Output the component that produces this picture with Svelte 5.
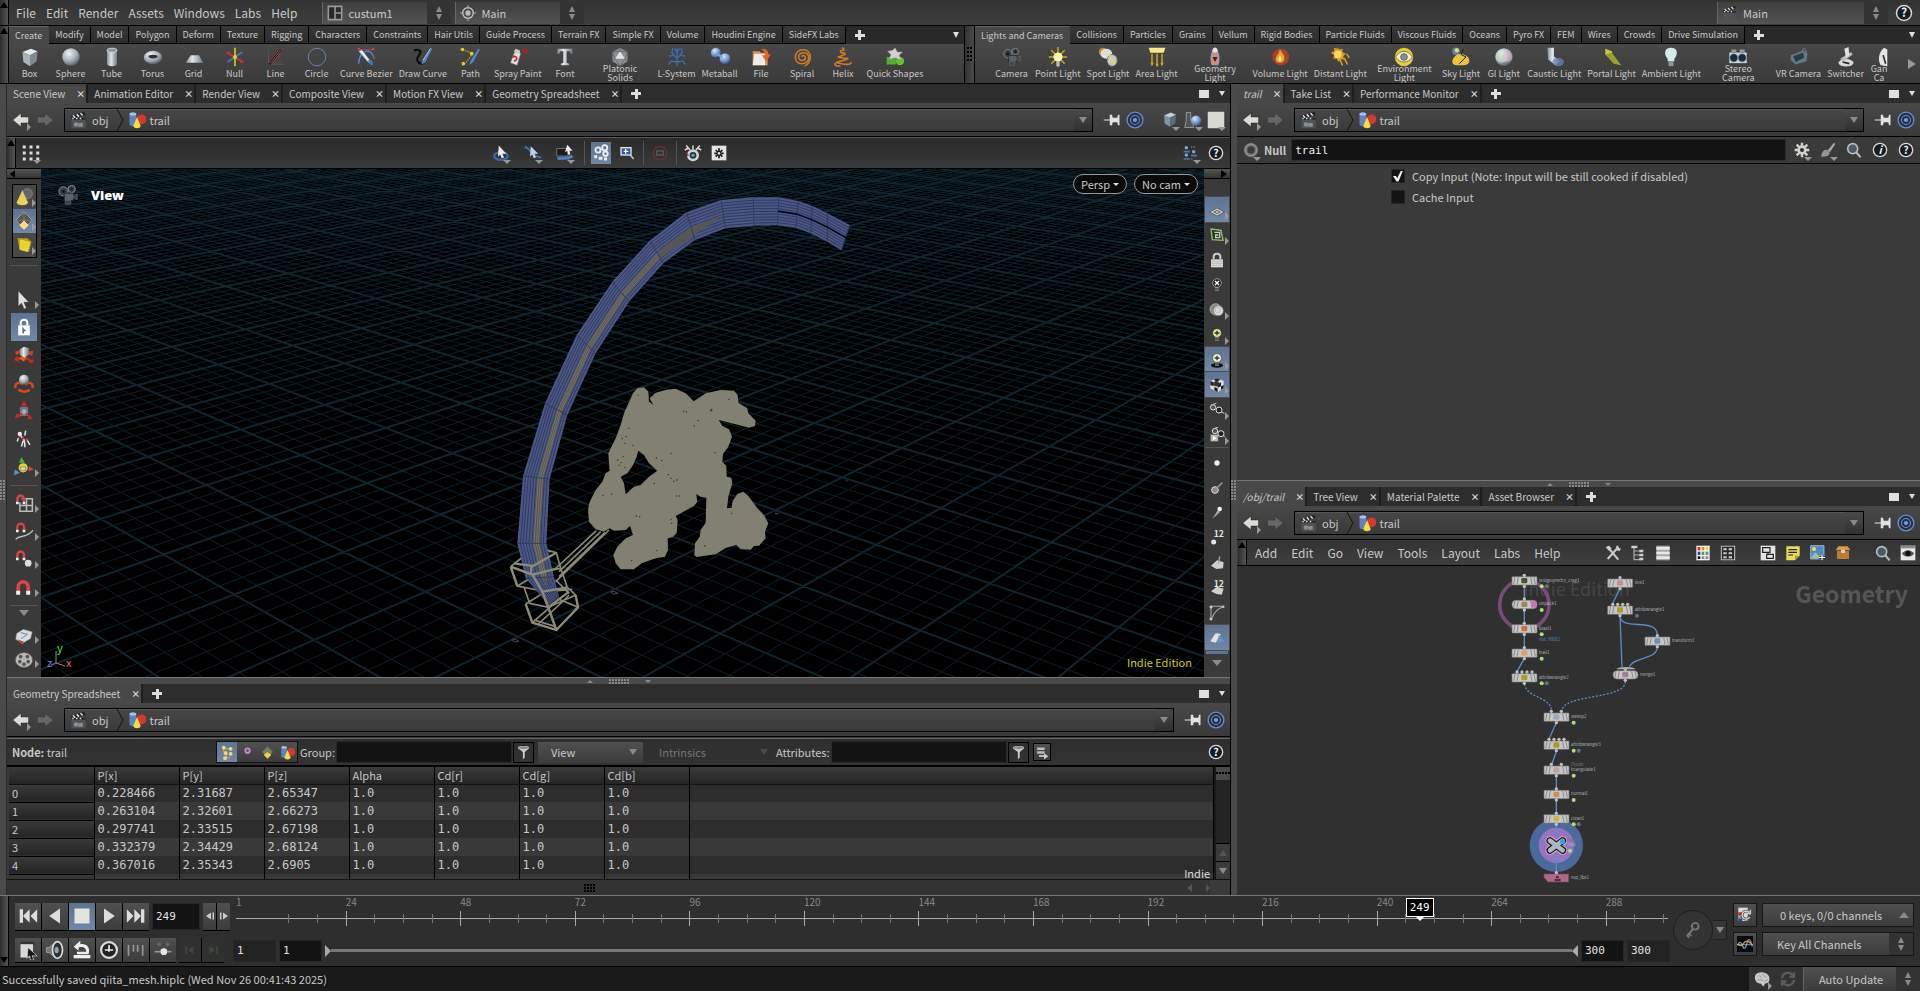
<script lang="ts">
  type Point = [number, number]

  const main_menu = ['File', 'Edit', 'Render', 'Assets', 'Windows', 'Labs', 'Help']
  const network_menu = ['Add', 'Edit', 'Go', 'View', 'Tools', 'Layout', 'Labs', 'Help']

  const shelf_sets = [
    {
      tabs: ['Create', 'Modify', 'Model', 'Polygon', 'Deform', 'Texture', 'Rigging', 'Characters', 'Constraints', 'Hair Utils', 'Guide Process', 'Terrain FX', 'Simple FX', 'Volume', 'Houdini Engine', 'SideFX Labs'],
      tools: [
        ['Box', 'box'], ['Sphere', 'sphere'], ['Tube', 'tube'], ['Torus', 'torus'], ['Grid', 'grid'],
        ['Null', 'null'], ['Line', 'line'], ['Circle', 'circle'], ['Curve Bezier', 'bezier'], ['Draw Curve', 'draw'],
        ['Path', 'path'], ['Spray Paint', 'spray'], ['Font', 'font'], ['Platonic Solids', 'platonic', 'two_line'], ['L-System', 'lsystem'],
        ['Metaball', 'metaball'], ['File', 'file'], ['Spiral', 'spiral'], ['Helix', 'helix'], ['Quick Shapes', 'quick'],
      ],
    },
    {
      tabs: ['Lights and Cameras', 'Collisions', 'Particles', 'Grains', 'Vellum', 'Rigid Bodies', 'Particle Fluids', 'Viscous Fluids', 'Oceans', 'Pyro FX', 'FEM', 'Wires', 'Crowds', 'Drive Simulation'],
      tools: [
        ['Camera', 'camera'], ['Point Light', 'point'], ['Spot Light', 'spot'], ['Area Light', 'area'], ['Geometry Light', 'geolight', 'two_line'],
        ['Volume Light', 'fire'], ['Distant Light', 'distant'], ['Environment Light', 'env', 'two_line'], ['Sky Light', 'sky'], ['GI Light', 'gi'],
        ['Caustic Light', 'caustic'], ['Portal Light', 'portal'], ['Ambient Light', 'bulb'], ['Stereo Camera', 'stereo', 'two_line'],
        ['VR Camera', 'vr'], ['Switcher', 'switcher'], ['Gan Ca', 'gamepad', 'two_line cut'],
      ],
    },
  ]

  const scene_tabs = ['Scene View', 'Animation Editor', 'Render View', 'Composite View', 'Motion FX View', 'Geometry Spreadsheet']
  const param_tabs = ['trail', 'Take List', 'Performance Monitor']
  const network_tabs = ['/obj/trail', 'Tree View', 'Material Palette', 'Asset Browser']

  const columns = ['P[x]', 'P[y]', 'P[z]', 'Alpha', 'Cd[r]', 'Cd[g]', 'Cd[b]']
  const rows = [
    ['0.228466', '2.31687', '2.65347'],
    ['0.263104', '2.32601', '2.66273'],
    ['0.297741', '2.33515', '2.67198'],
    ['0.332379', '2.34429', '2.68124'],
    ['0.367016', '2.35343', '2.6905'],
  ]

  // [icon, flags] where s = selected, a = has a sub menu arrow
  const mode_tools = [['cone', 'a'], ['tiles', 'sa'], ['cube_gold', 'a']]
  const transform_tools = [['cursor', 'a'], ['lock_tool', 's'], ['move', ''], ['rotate', ''], ['scale', ''], ['pose', ''], ['handles', 'a']]
  const snap_tools = [['magnet_grid', 'a'], ['magnet_curve', 'a'], ['magnet_point', 'a'], ['magnet', 'a']]
  const display_tools = [['ref_plane', 'sa'], ['ghost', 'a'], ['padlock', ''], ['bulb_off', ''], ['bulb_ring', 'a'], ['bulb_plus', 'a'], ['bulb_shadow', 'sa'], ['checker', 'sa'], ['eye', 'a'], ['eye_box', 'a']]
  const marker_tools = [['dot', ''], ['pt_normal', ''], ['pt_trail', ''], ['pt_num', ''], ['prim_normal', ''], ['prim_num', ''], ['profile', ''], ['backface', 's']]

  const frame_start = 1
  const frame_end = 300
  const current_frame = 249
  let copy_input = $state(true)
  let cache_input = $state(false)

  const frame_pos = (frame: number) => ((frame - frame_start) / (frame_end - frame_start)) * 100
  const ticks = Array.from({ length: 49 }, (_, i) => (i + 2) * 6)
  const major_frames = Array.from({ length: 12 }, (_, i) => (i + 1) * 24)

  // ground plane: two fans of lines, each leaving its own vanishing point
  const horizon = -249
  const ground_y = 331
  const fan = (vanish_x: number, start: number, step: number, from: number, to: number, major: boolean) => {
    let d = ''
    for (let n = from; n <= to; n++) {
      if ((n % 5 === 0) !== major) continue
      const x = start + (step * n) / 5
      const at = (y: number) => (vanish_x + ((x - vanish_x) * (y - horizon)) / (ground_y - horizon)).toFixed(1)
      d += `M${at(0)} 0L${at(600)} 600`
    }
    return d
  }
  const grid_minor = fan(-996, 196, 169.5, -50, 125, false) + fan(1934, 119, 159, -145, 60, false)
  const grid_major = fan(-996, 196, 169.5, -50, 125, true) + fan(1934, 119, 159, -145, 60, true)

  const outer: Point[] = [[270, 1275], [200, 1195], [175, 1090], [192, 888], [258, 670], [353, 465], [460, 305], [572, 182], [682, 97], [786, 60], [883, 52], [960, 52], [1018, 63], [1060, 78], [1105, 100], [1172, 135]]
  const inner: Point[] = [[300, 1250], [285, 1190], [262, 1090], [272, 897], [325, 705], [410, 520], [510, 365], [613, 250], [708, 180], [800, 145], [885, 137], [955, 136], [1010, 143], [1055, 160], [1105, 185], [1147, 211]]
  const mix = (t: number, from = 0, to = outer.length) =>
    outer.slice(from, to).map(([x, y], i): Point => [x + (inner[i + from][0] - x) * t, y + (inner[i + from][1] - y) * t])
  const poly = (points: Point[]) => points.map((p) => p.map(Math.round).join(',')).join(' ')
  const ribbon = poly([...outer, ...[...inner].reverse()])
  const ribbon_core = poly([[262, 1225], ...mix(0.52, 1, 9), [800, 101], ...mix(0.78, 1, 8).reverse()])
  const ribbon_slit = poly([...mix(0.46, 11), [1180, 170], ...mix(0.52, 11).reverse()])
  const strands = [0.1, 0.2, 0.3, 0.4, 0.5, 0.6, 0.7, 0.8, 0.9]
  const core_strands = [0.58, 0.65, 0.72]

  const nodes = [
    { x: 193, y: 62, label: 'testgeometry_crag1', badge: '#4a5230', dots: 2 },
    { x: 193, y: 133, label: 'unpack1', badge: '#9a8a50', dots: 1, round: true },
    { x: 193, y: 206, label: 'blast1', badge: '#d0703a', dots: 1 },
    { x: 193, y: 279, label: 'trail1', badge: '#e0a070', dots: 1 },
    { x: 193, y: 353, label: 'attribwrangle2', badge: '#b09a20', dots: 2, inputs: 4 },
    { x: 480, y: 69, label: 'line1', badge: '#c09090', dots: 0 },
    { x: 480, y: 150, label: 'attribwrangle1', badge: '#b09a20', dots: 3, inputs: 4 },
    { x: 592, y: 243, label: 'transform1', badge: '#6a90b8', dots: 0 },
    { x: 496, y: 344, label: 'merge1', badge: '#a08090', dots: 0, round: true },
    { x: 289, y: 471, label: 'sweep2', badge: '#a0a8c0', dots: 1, inputs: 2 },
    { x: 289, y: 555, label: 'attribwrangle3', badge: '#b09a20', dots: 2, inputs: 4 },
    { x: 289, y: 630, label: 'triangulate1', badge: '#c0a0a0', dots: 1, inputs: 2 },
    { x: 289, y: 703, label: 'normal1', badge: '#d09050', dots: 1 },
    { x: 289, y: 776, label: 'clean1', badge: '#d0b040', dots: 2 },
  ]

  const magnet = '<path d="M3 15V9a7 7 0 0 1 14 0v6h-4V9a3 3 0 0 0-6 0v6z" fill="#d24a4a" stroke="#7a2222" stroke-width=".6"/><path d="M3 13h4v4H3zM13 13h4v4h-4z" fill="#eee"/>'
  const magnet_small = `<g transform="scale(.8)">${magnet}</g>`
  const bulb = (fill: string) => `<circle cx="12" cy="9" r="6.500" fill="${fill}" stroke="#222" stroke-width=".6"/><path d="M9 15h6v6H9z" fill="#777"/><path d="M9 17h6M9 19h6" stroke="#444"/>`
  const glasses = '<circle cx="6" cy="8" r="4" fill="#555" stroke="#ddd" stroke-width="1.500"/><circle cx="15" cy="12" r="4.500" fill="#222" stroke="#ddd" stroke-width="1.500"/><path d="M3 5l8-3M18 15l5 2" stroke="#bbb" stroke-width="1.600"/>'
  const clapper = '<path d="M2 10h19v13H2z" fill="#4d5256"/><path d="M2 9.500h19v2H2z" fill="#222"/><path d="M1 7l18-6 2 4-18 5z" fill="#222"/><path d="M4 6l3 3M9 4.500l3 3M14 3l3 3M4 9v2M9 9v2M14 9v2" stroke="#ddd" stroke-width="2"/>'
  const camera = '<circle cx="7" cy="8" r="5" fill="#3b4045" stroke="#8a9094"/><circle cx="16" cy="5.500" r="4" fill="#3b4045" stroke="#8a9094"/><path d="M8 10h10v8H8z" fill="#596066" stroke="#23282c"/><path d="M18 13l4-2v6l-4-2zM9 18h6v4H9z" fill="#3a3f44" stroke="#777c80" stroke-width=".6"/><circle cx="7" cy="8" r="1.800" fill="#15181a"/><circle cx="16" cy="5.500" r="1.400" fill="#15181a"/>'
  const number_text = '<text x="7" y="11" class="icon_number">12</text>'
  const ring = '<circle cx="12" cy="12" r="10" fill="#161c22" stroke="#d8d8d8" stroke-width="2"/>'

  const icons: Record<string, string> = {
    box: '<path d="M3 6l10-4 8 3-9 5z" fill="#e4e9ec"/><path d="M3 6l9 4v13l-8-5z" fill="#a9b4ba"/><path d="M12 10l9-5-1 12-8 6z" fill="#7d8b93"/>',
    sphere: '<circle cx="12" cy="12" r="10.500" fill="url(#ball)"/>',
    tube: '<path d="M6 4v16c0 4 12 4 12 0V4z" fill="url(#steel)"/><ellipse cx="12" cy="4" rx="6" ry="2.500" fill="#8b98a3" stroke="#dbe2e6"/>',
    torus: '<ellipse cx="12" cy="12.500" rx="11" ry="8" fill="url(#ball)"/><ellipse cx="12" cy="11.500" rx="5.500" ry="2.200" fill="#2b3137"/>',
    grid: '<path d="M8 10h10l5 9H2z" fill="url(#steel)"/>',
    null: '<path d="M12 1v22" stroke="#b7b61c" stroke-width="2.400"/><path d="M2 7l20 11" stroke="#d03030" stroke-width="2"/><path d="M21 6L3 18" stroke="#3f77c0" stroke-width="2"/><path d="M18 15l5 4h-5zM2 5l5 1-3 3z" fill="#d03030"/><circle cx="12" cy="12" r="2.500" fill="#d8cf30"/>',
    line: '<path d="M3 3v18h20M5 19l13 0M8 22L20 2" stroke="#555" fill="none"/><path d="M4 21L18 3" stroke="#e33" stroke-width="4"/><path d="M4 21L18 3" stroke="#111" stroke-width="3"/><path d="M5 20L18 3" stroke="#999" stroke-width=".8"/><path d="M15 7c0 6 2 12 6 13" stroke="#c33" stroke-dasharray="2 2" fill="none"/>',
    circle: '<circle cx="12" cy="12" r="10.500" fill="none" stroke="#6a80a8" stroke-width="1.200"/>',
    bezier: '<path d="M3 20C5 2 18 0 22 14" fill="none" stroke="#4c8ad0" stroke-width="1.800"/><path d="M4 3h18" stroke="#b44"/><path d="M3 5l4-2 10 13 3 6-6-4z" fill="#dfe6ec" stroke="#345" stroke-width=".6"/><path d="M14 16l4 6 3 0-2-6z" fill="#3a78c8"/><path d="M2 1h3v3H2zM19 1h3v3h-3z" fill="#d04040"/>',
    draw: '<path d="M1 4c8-2 10 2 6 6-4 5-1 11 5 10" fill="none" stroke="#0c0c0c" stroke-width="2.600"/><path d="M10 21l2-6L21 1l2 1-8 16z" fill="#4c86cc"/><path d="M12 16L21 2" stroke="#b9d4f0"/>',
    path: '<path d="M3 3l12 5-9 12" fill="none" stroke="#bb9b18" stroke-dasharray="2 1" stroke-width="1.500"/><circle cx="3" cy="3" r="2.200" fill="#e6c820"/><circle cx="14" cy="8" r="2.200" fill="#e6c820"/><circle cx="4" cy="20" r="2.200" fill="#e6c820"/><path d="M11 22l2-6L22 2l2 1-8 15z" fill="#4c86cc"/>',
    spray: '<path d="M8 6l7 2-4 14-8-3z" fill="#e4e4e4" stroke="#777" stroke-width=".6"/><path d="M9 2l5 2 1 5-8-3z" fill="#c9c9c9"/><path d="M5 12c6-3 8 4 2 5" fill="none" stroke="#d02020" stroke-width="2"/><path d="M15 4l8-2v7z" fill="#c01818"/>',
    font: '<path d="M3 2h18v6h-2l-1-3h-4v14l3 1v2H7v-2l3-1V5H6L5 8H3z" fill="url(#steel)"/>',
    platonic: '<path d="M12 1l9 5v11l-9 6-9-6V6z" fill="#8c8f91"/><path d="M12 5l6 9H6z" fill="#e0e2e3"/><path d="M12 1v4L3 6l3 8-3 3M12 5l9 1-3 8 3 3M6 14l6 9 6-9" fill="none" stroke="#5a5c5e" stroke-width=".8"/>',
    lsystem: '<path d="M12 23v-9M12 14L5 6M12 14l7-8M12 12V2M8 10L2 11M16 10l6 1M6 7L7 1M18 7l-1-6M12 18l-7-1-3 4M12 18l7-1 3 4M12 6L9 2M12 6l3-4" stroke="#3a70b4" stroke-width="1.600" fill="none"/>',
    metaball: '<circle cx="7" cy="7" r="6" fill="url(#blue)"/><circle cx="18" cy="14" r="6.500" fill="url(#blue)"/><path d="M9 9l6 3" stroke="#7ea6d8" stroke-width="3"/>',
    file: '<path d="M2 5h8l2 2h8v15H2z" fill="#d89050"/><path d="M4 8h13v14H2z" fill="#ececec"/><path d="M12 3c6-3 9 2 9 6h3l-6 8-5-7h4c0-4-2-6-5-7z" fill="#e8641e"/>',
    spiral: '<path d="M12 12c0-3 4-2 4 1 0 4-8 5-8-1 0-7 12-7 12 1 0 9-16 10-16-1C4 1 22 0 22 12c0 6-3 9-7 11" fill="none" stroke="#d07c28" stroke-width="1.900"/>',
    helix: '<path d="M11 1c3 1 3 3 0 3s-3 3 0 3 6 1 1 3-9 2-2 3 12 0 3 3-13 2-3 4 13 0 11-2M3 19c-3 3 2 4 6 4" fill="none" stroke="#cf7b2c" stroke-width="1.900"/>',
    quick: '<path d="M2 12h11v9H2z" fill="#55b02c"/><circle cx="18" cy="17" r="5" fill="#5cc432"/><path d="M12 1l3 5 6 0-4 4 3 6-8-3-7 2 2-6-4-4 6-1z" fill="#cfd2cf" stroke="#888" stroke-width=".6"/>',
    camera,
    point: '<path d="M12 0v24M1 12h22M4 4l16 16M20 4L4 20" stroke="#c9a720" stroke-width="1.800"/><circle cx="12" cy="12" r="5.500" fill="#fff7b0"/><path d="M10 17h4v6h-4z" fill="#b9b9b9"/>',
    spot: '<circle cx="6" cy="6" r="5" fill="#e08420"/><ellipse cx="10" cy="8" rx="7" ry="6" fill="#dcdcdc"/><ellipse cx="17" cy="16" rx="6" ry="7" fill="#c8cac4" stroke="#777"/><path d="M13 9l7 11" stroke="#e8d850" stroke-width="1.800"/>',
    area: '<path d="M2 1h20l-2 6H4z" fill="#fbe88a"/><path d="M6 8v14M12 8v15M18 8v14" stroke="#c9a720" stroke-width="1.800"/><path d="M4 19h4l-2 4zM10 20h4l-2 4zM16 19h4l-2 4z" fill="#c9a720"/>',
    geolight: '<path d="M12 0c5 4 7 14 4 22H8C5 14 7 4 12 0z" fill="#b890a8"/><circle cx="12" cy="4" r="3" fill="#e4e0e4"/><path d="M12 8c3 4 3 9 0 13-3-4-3-9 0-13z" fill="#f08820"/><path d="M9 12l3 6 3-6z" fill="#2a2a3a"/>',
    fire: '<circle cx="13" cy="12" r="10" fill="#c04028" opacity=".8"/><path d="M12 2c1 5 7 7 5 14-1 4-9 4-10 0-1-5 4-7 5-14z" fill="#f6a020"/><path d="M12 10c2 3 3 5 0 8-3-3-2-5 0-8z" fill="#fff2a0"/>',
    distant: '<path d="M9 0l2 3 4-1 0 4 4 2-3 3 1 4-4 0-3 3-2-4-4 0 1-4-4-3 4-2 0-4 4 1z" fill="#e09a20"/><circle cx="9.500" cy="9" r="4.500" fill="#ffd860"/><path d="M12 15l3 7M17 13l4 8M20 8l3 5" stroke="#d0a820" stroke-width="1.800"/>',
    env: '<circle cx="12" cy="12" r="11" fill="#e6cc3a"/><path d="M2 12c5-9 15-9 20 0-5 8-15 8-20 0z" fill="#f7f2d0" stroke="#7a6a10"/><circle cx="12" cy="12" r="4" fill="#8a8f9a" stroke="#555"/>',
    sky: '<circle cx="6" cy="5" r="4.500" fill="#5a86b8"/><path d="M4 12c5-6 12-4 16 0 4 4 2 10-5 10H7c-6 0-7-6-3-10z" fill="#eec23a"/><path d="M15 2l-3 7 6 3-8 8" stroke="#222" fill="none" stroke-width="1.200"/><circle cx="7" cy="4" r="2.500" fill="#f6d850"/>',
    gi: '<circle cx="12" cy="12" r="10.500" fill="url(#ball)"/><circle cx="9" cy="12" r="7" fill="#c8e8c8" opacity=".55"/><circle cx="16" cy="12" r="6" fill="#e8b8c8" opacity=".5"/>',
    caustic: '<path d="M4 1h8v10l7 6-5 5-9-7z" fill="url(#steel)"/><ellipse cx="17" cy="18" rx="7" ry="5" fill="#6a88b8" opacity=".7"/>',
    portal: '<path d="M4 2l8 3v9l-8-5z" fill="#c8c83a"/><path d="M4 9l8-2 11 15-9-2z" fill="#99a02a"/>',
    bulb: '<path d="M12 1c8 0 9 8 4 13v3H8v-3C3 9 4 1 12 1z" fill="#d4ece8"/><path d="M9 17h6v6H9z" fill="#8e9494"/>',
    stereo: '<path d="M1 6h22v14H1z" fill="#cfd3d6" stroke="#333"/><circle cx="7" cy="13" r="5" fill="#1a2a40" stroke="#8ab"/><circle cx="17" cy="13" r="5" fill="#1a2a40" stroke="#8ab"/><path d="M4 3h6v3H4zM14 3h6v3h-6z" fill="#999"/>',
    vr: '<path d="M2 10l16-6 4 5-1 8-13 4-6-5z" fill="#5e7a86"/><path d="M5 11l12-4 1 6-10 5z" fill="#2a3a42"/><path d="M16 5c0-5 5-5 5 4" fill="none" stroke="#889"/>',
    switcher: '<ellipse cx="12" cy="19" rx="9" ry="4.500" fill="#d8d8d8"/><path d="M5 14l13-8 2 3-12 9z" fill="#b8bcbe"/><path d="M10 2l5-2 1 10-4 3z" fill="#e2e2e2"/><path d="M8 18l8 2" stroke="#222" stroke-width="2"/>',
    gamepad: '<path d="M14 22c-4-7-2-16 4-21l4 2v20z" fill="#e4e4e4"/><path d="M17 10l3 10" stroke="#333" stroke-width="2"/>',

    layout: '<path d="M2 2h20v20H2zM12 2v20M12 12h10" fill="#2a2a2a" stroke="#999" stroke-width="2.400"/>',
    desk: '<circle cx="12" cy="12" r="8" fill="none" stroke="#ccc" stroke-width="1.800"/><circle cx="12" cy="12" r="4" fill="#bbb"/><path d="M12 0v6M12 18v6M0 12h6M18 12h6" stroke="#aaa" stroke-width="1.500"/>',
    clapper,
    help: `${ring}<text x="12" y="17.500" class="icon_glyph">?</text>`,
    info: `${ring}<text x="12" y="17.500" class="icon_glyph slanted">i</text>`,
    obj: clapper + '<circle cx="8" cy="18" r="3" fill="#8a8f92"/><path d="M11 16h6v5h-6z" fill="#8a8f92"/>',
    shapes: '<path d="M2 4c0-3 9-3 9 0v14c0 3-9 3-9 0z" fill="#5a86c0"/><ellipse cx="6.500" cy="4" rx="4.500" ry="2" fill="#a8c4e4"/><circle cx="18" cy="11" r="6.500" fill="#d43a2c"/><path d="M12 8l5 12c-1 4-9 4-10 0z" fill="#f6dc3c"/>',
    back: '<path d="M1 12L12 3v5h10v8H12v5z" fill="#dcdcd6" stroke="#222" stroke-width=".6"/>',
    forward: '<path d="M23 12L12 3v5H2v8h10v5z" fill="#666" stroke="#333" stroke-width=".6"/>',
    pin: '<path d="M1 12h9" stroke="#ccc" stroke-width="1.600"/><path d="M9 5h3l1 4h6l1-4h2v14h-2l-1-4h-6l-1 4H9z" fill="#e2e2de"/>',
    target: '<circle cx="12" cy="12" r="10.500" fill="#223048" stroke="#6a8ec4" stroke-width="1.800"/><circle cx="12" cy="12" r="6" fill="none" stroke="#6a8ec4" stroke-width="1.500"/><circle cx="12" cy="12" r="2.800" fill="#6aa0e8"/>',
    cube: '<path d="M4 6l9-4 7 3-8 4z" fill="#c4d0d8"/><path d="M4 6l8 3v12l-7-4z" fill="#8294a0"/><path d="M12 9l8-4-1 11-7 5z" fill="#5b6d7a"/>',
    solids: '<path d="M3 2h6v8l4 12H1L3 12z" fill="#555" stroke="#aaa"/><circle cx="16" cy="13" r="7" fill="url(#blue)"/>',
    square: '<path d="M1 1h22v22H1z" fill="#d8d8d4"/>',
    dots: '<path d="M1 2h4v4H1zM10 2h4v4h-4zM19 2h4v4h-4zM1 10h4v4H1zM10 10h4v4h-4zM19 10h4v4h-4zM1 18h4v4H1zM10 18h4v4h-4zM19 18h4v4h-4z" fill="#ddd"/>',
    view_tool: '<ellipse cx="12" cy="16" rx="9" ry="5" fill="none" stroke="#3a6ab0" stroke-width="3"/><path d="M9 2l10 11h-5l2 5-3 1-2-5-3 3z" fill="#eee"/>',
    view_curve: '<path d="M1 4c8 0 8 14 22 14" fill="none" stroke="#3a6ab0" stroke-width="3"/><path d="M9 3l10 10h-5l2 5-3 1-2-5-3 3z" fill="#bcd0e8"/>',
    view_box: '<path d="M1 6h15v10H1z" fill="#1c1c1c" stroke="#888"/><path d="M2 20c6-3 12 2 20-4" stroke="#4a80c8" stroke-width="4" fill="none"/><path d="M15 1l7 8h-4l1 5-3 0-1-5-3 2z" fill="#eee"/>',
    objects: '<g fill="none" stroke="#eee" stroke-width="2.400"><circle cx="8" cy="8" r="3.500"/><circle cx="17" cy="5" r="3.500"/><circle cx="18" cy="13" r="3"/></g><path d="M3 15h4v4H3zM9 17h5v4H9zM16 18h4v4h-4z" fill="#eee"/>',
    zoom_sel: '<path d="M2 3h17v13H2z" fill="#dfe6ee"/><path d="M4 5h13v9H4z" fill="#2c5a9a"/><path d="M10 6v7M7 9.500h7" stroke="#fff" stroke-width="2"/><path d="M17 15l5 6" stroke="#ccc" stroke-width="2"/>',
    stop: '<circle cx="12" cy="12" r="10" fill="none" stroke="#6e2e2e" stroke-width="2"/><path d="M7 9h10v6H7z" fill="none" stroke="#555" stroke-width="2"/>',
    bug: '<circle cx="12" cy="15" r="8" fill="#ccd6d8"/><circle cx="12" cy="15" r="4.500" fill="#26343a"/><circle cx="12" cy="15" r="2" fill="#5ab0d0"/><path d="M12 7V2M8 8L3 2M16 8l5-6M5 6L1 8M19 6l4 2" stroke="#ddd" stroke-width="2"/><path d="M3 11l4 4-3 1z" fill="#c33"/>',
    gearbox: '<path d="M1 1h22v22H1z" fill="#e4e4e4"/><path d="M12 5v15M5 12.500h14M7 7.500l10 10M17 7.500l-10 10" stroke="#1a1a1a" stroke-width="2.600"/><circle cx="12" cy="12.500" r="2" fill="#e4e4e4"/>',
    people: '<g fill="#7fa6dc"><circle cx="5" cy="4" r="2.600"/><circle cx="5" cy="15" r="2.600"/><circle cx="16" cy="10" r="2.600"/></g><path d="M1 10h9M1 21h9M12 16h9" stroke="#4a78b8" stroke-width="2.400"/><path d="M12 3h8M12 21h4" stroke="#ccc" stroke-dasharray="2 2"/>',

    cone: '<circle cx="16" cy="8" r="6" fill="#666" stroke="#888"/><path d="M10 4l7 15c-2 4-12 4-14 0z" fill="#e8d25a"/>',
    tiles: '<path d="M12 1l10 10-10 10L2 11z" fill="#555" stroke="#aaa"/><path d="M12 1v20M2 11h20" stroke="#888"/><path d="M12 12l5 5-5 5-5-5z" fill="#ffd964" stroke="#fff3c0"/>',
    cube_gold: '<path d="M4 4l12 0 5 4-3 12-11-2z" fill="#b9a010"/><path d="M8 6l11 3-3 11-9-3z" fill="#ead22c" stroke="#fff080" stroke-width=".6"/>',
    cursor: '<path d="M5 2l13 14h-6l3 7-3 1-3-7-4 4z" fill="#e0e0dc" stroke="#222" stroke-width=".6"/>',
    lock_tool: '<path d="M5 10h14v12H5z" fill="#fff"/><path d="M8 10V7c0-5 8-5 8 0v3" fill="none" stroke="#fff" stroke-width="2.400"/><path d="M10 12l5 5h-3v3l-2-1z" fill="#55708f"/>',
    move: '<path d="M0 18l3-5 1 2 6-2 1 3-6 3 2 2zM24 21l-7 1 2-2-5-3 2-3 5 4 1-2z" fill="#c62d18"/><path d="M1 8l6-2v4l-4 2zM17 8l6-1-1 6-5-2z" fill="#d8401c"/><path d="M6 16l5-3 4 2-3 5z" fill="#e0602a"/><path d="M7 5l5-3 6 2v7l-5 4-6-3z" fill="url(#steel)"/>',
    rotate: '<path d="M2 18c-2-6 5-8 8-4M22 18c2-6-5-8-8-4M5 20c5 3 10 3 14 0" fill="none" stroke="#d8481c" stroke-width="3"/><circle cx="12" cy="8" r="6" fill="url(#ball)"/>',
    scale: '<path d="M12 0l4 5h-3v6h-2V5H8zM1 21l2-6 5 4zM23 22l-7 0 3-5z" fill="#d02818"/><path d="M7 7h10v11H7z" fill="#77838c" opacity=".85"/><circle cx="12" cy="13" r="3" fill="#9ab0c4"/><path d="M4 18l6-3M19 19l-5-4" stroke="#d02818" stroke-width="2"/>',
    pose: '<circle cx="7" cy="6" r="2.600" fill="#eee"/><path d="M8 8l4 5 1 5 0 4M14 2l-1 6M5 11l-1 4M15 12l4 7M11 14l-2 7" stroke="#e6e6e6" stroke-width="1.800" fill="none"/><circle cx="11" cy="11" r="1.600" fill="#d43030"/><circle cx="15" cy="13" r="1.500" fill="#d43030"/><circle cx="6" cy="10" r="1.200" fill="#d43030"/>',
    handles: '<path d="M9 0l4 7H6z" fill="#4caf3c"/><path d="M0 22l1-7 6 4z" fill="#5a90d8"/><path d="M24 15l-7 2 1-6z" fill="#d84848"/><circle cx="11" cy="13" r="5.500" fill="#e8cf30"/><path d="M8 12h6v4H8z" fill="#ddd" stroke="#555" stroke-width=".6"/>',
    magnet_grid: '<path d="M9 7h13v15H7V11M7 15h15M15 7v15" fill="none" stroke="#bbb" stroke-width="1.800"/>' + magnet_small,
    magnet_curve: '<path d="M2 22c5-6 12 0 21-11" fill="none" stroke="#bbb" stroke-width="1.600"/>' + magnet_small,
    magnet_point: '<circle cx="17" cy="17" r="4" fill="#ddd"/>' + magnet_small,
    magnet: `<g transform="translate(-1 1) scale(1.2)">${magnet}</g>`,
    papers: '<path d="M3 9l8-5 11 3-2 8-10 6-8-5z" fill="#dcdcdc" stroke="#777" stroke-width=".6"/><path d="M8 8l8 2-7 5" stroke="#47a" fill="none"/><path d="M4 16l8 3-3 3z" fill="#c84030"/>',
    reel: '<ellipse cx="12" cy="12" rx="10.500" ry="9" fill="#b9b9b4" stroke="#555"/><g fill="#555"><circle cx="8" cy="8" r="2.200"/><circle cx="16" cy="8" r="2.200"/><circle cx="7" cy="14" r="2.200"/><circle cx="17" cy="14" r="2.200"/><circle cx="12" cy="17" r="2.200"/></g>',
    ref_plane: '<path d="M1 15l11-6 11 6-11 6z" fill="#c9ccce" stroke="#444"/><path d="M6 15l6-3 6 3-6 3z" fill="#555"/><path d="M9 15l3-1.500 3 1.500-3 1.500z" fill="#ddd"/>',
    ghost: '<path d="M3 3l15 2 3 15-16-1z" fill="#28351f" stroke="#8cc66c" stroke-width="2"/><path d="M8 8h8v8h-6v-4h4" fill="none" stroke="#ccc" stroke-width="2"/>',
    padlock: '<path d="M3 11h18v12H3z" fill="#dcdcd8"/><path d="M3 14h18M3 17h18M3 20h18" stroke="#aaa"/><path d="M7 11V7c0-6 10-6 10 0v4" fill="none" stroke="#ccc" stroke-width="3"/>',
    bulb_off: bulb('#444') + '<circle cx="12" cy="9" r="6.500" fill="#222" stroke="#ccc"/><path d="M9 6l6 6M15 6l-6 6" stroke="#fff" stroke-width="2"/>',
    bulb_ring: '<circle cx="10" cy="11" r="8.500" fill="#888" stroke="#ccc"/><circle cx="14" cy="13" r="7.500" fill="#d8d8d4" stroke="#777"/><circle cx="13" cy="12" r="4" fill="none" stroke="#aaa"/>',
    bulb_plus: bulb('#dbe08c') + '<path d="M12 5.500v7M8.500 9h7" stroke="#333" stroke-width="2"/>',
    bulb_shadow: '<ellipse cx="12" cy="20" rx="9" ry="3.500" fill="#111"/>' + bulb('#eef0c8') + '<path d="M12 5.500v7M8.500 9h7" stroke="#333" stroke-width="2"/>',
    checker: '<path d="M2 6l10-4 10 4v11l-9 6-11-6z" fill="#ddd"/><path d="M7 4l5-2 5 2-5 3zM2 6l5 2v6l-5-2zM13 10l5-2v6l-5 2zM8 15l5 2v6l-5-3zM18 14l4-2v5l-4 2z" fill="#222"/><circle cx="11" cy="10" r="4" fill="#333"/>',
    eye: glasses,
    eye_box: '<path d="M2 11h12v11H2z" fill="#bbb" stroke="#444"/><path d="M6 13l5 4-5 3z" fill="#fff"/><g transform="translate(3 -2)">' + glasses + '</g>',
    dot: '<circle cx="12" cy="12" r="4" fill="#eee"/>',
    pt_normal: '<circle cx="9" cy="15" r="5" fill="#888" stroke="#ddd" stroke-width="1.500"/><path d="M9 15L20 4" stroke="#8a9aa0" stroke-width="2.400"/>',
    pt_trail: '<circle cx="16" cy="6" r="3.500" fill="#eee"/><path d="M13 8l4 2L5 21z" fill="#aaa"/>',
    pt_num: '<circle cx="7" cy="18" r="3.800" fill="#e4e4e4"/>' + number_text,
    prim_normal: '<path d="M3 16l9-8 10 3-1 9-10 1z" fill="#cfcfcb"/><path d="M14 14l2-12" stroke="#aaa" stroke-width="2"/>',
    prim_num: '<path d="M3 17l9-7 10 3-3 9-8-1z" fill="#cfcfcb"/>' + number_text,
    profile: '<path d="M3 2h19M3 2v19M5 19C8 10 14 5 21 3" fill="none" stroke="#aaa" stroke-width="1.600"/><path d="M1 1h4v4H1zM20 1h3v3h-3zM1 19h4v4H1z" fill="#ccc"/>',
    backface: '<path d="M2 17L10 5l8 1-8 13z" fill="#e2e2de"/><path d="M15 7l8 10-11 2z" fill="#5f93d8"/>',

    tree: '<path d="M6 2v9M6 6h9M6 11h4v9h6" stroke="#c9a63a" stroke-width="2" fill="none"/><g fill="#f2d878"><circle cx="6" cy="4" r="3"/><circle cx="17" cy="6" r="3"/><circle cx="9" cy="13" r="3"/><circle cx="17" cy="14" r="3"/><circle cx="8" cy="21" r="3"/></g>',
    vertex: '<circle cx="12" cy="9" r="5" fill="#c88ad0"/><circle cx="12" cy="9" r="2.200" fill="#704878"/>',
    prims: '<path d="M12 2l9 9-9 9-9-9z" fill="#7b7b60" stroke="#555"/><path d="M12 11l6 5-6 6-6-6z" fill="#f2cf50"/>',
    filter: '<path d="M3 4c0-3 18-3 18 0 0 3-6 5-7 8v8l-3 3V12C10 9 3 7 3 4z" fill="#c9c9c4"/><ellipse cx="12" cy="4" rx="8" ry="2.200" fill="#888"/>',
    delta: '<path d="M5 4h12v4H5zM5 10h12v4H5zM8 16h9v3H8z" fill="#bbb"/><path d="M16 13l7 5-7 5z" fill="#ccc"/>',

    tools: '<path d="M4 3l16 19M20 3L4 21" stroke="#ccc" stroke-width="3"/><path d="M1 3l5-2 4 4-4 4zM17 1h3v4h4l-2 4-5-1z" fill="#ccc"/>',
    hier: '<path d="M6 1v21h12M6 9h12M6 15h12" stroke="#aaa" stroke-width="1.800" fill="none"/><path d="M2 1h9v4H2zM14 7h6v4h-6zM14 13h6v4h-6zM14 19h6v4h-6z" fill="#ccc"/>',
    list: '<path d="M2 1h20v22H2z" fill="#a8a8a8"/><path d="M2 3h20v4H2zM2 10h20v4H2zM2 17h20v4H2z" fill="#e8e8e4"/>',
    palette: '<path d="M2 1h20v22H2z" fill="#f4f4f4"/><path d="M4 3h4v5H4z" fill="#d22"/><path d="M10 3h4v5h-4z" fill="#e80"/><path d="M16 3h4v5h-4z" fill="#dd2"/><path d="M4 10h4v5H4z" fill="#33c"/><path d="M10 10h4v5h-4z" fill="#3a3"/><path d="M16 10h4v5h-4z" fill="#4a8ad0"/><path d="M4 17h4v4H4z" fill="#111"/><path d="M10 17h4v4h-4zM16 17h4v4h-4z" fill="#888"/>',
    grid_opts: '<path d="M2 2h20v20H2z" fill="#2a2a2a" stroke="#bbb" stroke-width="1.600"/><path d="M5 5h5v3H5zM13 5h5v3h-5zM5 11h5v3H5zM13 11h5v3h-5zM5 17h5v3H5zM13 17h5v3h-5z" fill="#ccc"/>',
    frames: '<path d="M1 1h22v22H1z" fill="#e4e4e4"/><path d="M4 4h11v7H4zM10 14h10v6H10zM12 14v-3" fill="none" stroke="#222" stroke-width="1.800"/>',
    sticky: '<path d="M2 2h20v14l-7 7H2z" fill="#eedc52"/><path d="M5 7h13M5 11h13M5 15h7" stroke="#222" stroke-width="1.800"/><path d="M15 23v-7h7z" fill="#a89a30"/>',
    image: '<path d="M1 1h20v20H1z" fill="#4a8cc8" stroke="#c8dcf0"/><path d="M1 20l7-9 5 5 4-3 4 7z" fill="#9cc0a0"/><circle cx="6" cy="6" r="3" fill="#f0e040"/><path d="M18 14v9M13.500 18.500h9" stroke="#111" stroke-width="4"/><path d="M18 14v9M13.500 18.500h9" stroke="#fff" stroke-width="2"/>',
    archive: '<path d="M5 2h14l4 6H1z" fill="#d49a4c"/><path d="M3 9h18v12H3z" fill="#b87c34"/><path d="M9 7h6v5H9z" fill="#ead0a0"/>',
    search: '<circle cx="10" cy="10" r="7.500" fill="#4a5a62" stroke="#b9c0c4" stroke-width="2.400"/><path d="M15 15l7 8" stroke="#bbb" stroke-width="3"/>',
    view_eye: '<path d="M1 1h22v22H1z" fill="#e8e8e8"/><path d="M1 1h22v4H1z" fill="#888"/><path d="M3 13c4-7 14-7 18 0-4 6-14 6-18 0z" fill="#555"/><circle cx="12" cy="12.500" r="4" fill="#111"/>',
    gear: '<path d="M12 1v22M1 12h22M4 4l16 16M20 4L4 20" stroke="#d0d0cc" stroke-width="3.600"/><circle cx="12" cy="12" r="7" fill="#d0d0cc"/><circle cx="12" cy="12" r="3" fill="#2c2c2c"/>',
    brush: '<path d="M12 12L21 1l2 2-8 12z" fill="#a8a8a8"/><path d="M2 19c2-8 8-9 12-5 2 6-4 9-12 8z" fill="#8f988f"/>',
    ring_null: '<circle cx="12" cy="12" r="8" fill="none" stroke="#777" stroke-width="5"/><circle cx="12" cy="12" r="9" fill="none" stroke="#aaa"/>',

    to_start: '<path d="M2 4h4v16H2zM14 4v16L6 12zM23 4v16l-8-8z" fill="#ddd"/>',
    play_back: '<path d="M18 3v18L5 12z" fill="#ddd"/>',
    halt: '<path d="M3 3h18v18H3z" fill="#e4e4de"/>',
    play: '<path d="M6 3v18l13-9z" fill="#ddd"/>',
    to_end: '<path d="M18 4h4v16h-4zM10 4v16l8-8zM1 4v16l8-8z" fill="#ddd"/>',
    step_back: '<path d="M14 5v14L4 12zM17 5h3v14h-3z" fill="#ccc"/>',
    step_next: '<path d="M10 5v14l10-7zM4 5h3v14H4z" fill="#ccc"/>',
    range_cursor: '<path d="M3 2h17v4H3z" fill="#333"/><path d="M3 5h15v16H3z" fill="#d8d8d8"/><path d="M12 9l11 10h-6l2 5-4 0-1-5-3 3z" fill="#151515" stroke="#ddd" stroke-width=".8"/>',
    speaker: '<path d="M2 9h3l8-7v20l-8-7H2z" fill="#777" stroke="#aaa"/><ellipse cx="15" cy="12" rx="6" ry="10" fill="#2a3036" stroke="#ddd" stroke-width="2"/><ellipse cx="14" cy="12" rx="2.500" ry="4" fill="#9aa4ac"/>',
    loop: '<path d="M2 18h20v4H2z" fill="#eee"/><path d="M10 1L2 8l6 5V9c7-2 9 2 9 5H6v3h14c2-8-2-13-10-12z" fill="#eee"/>',
    clock: '<circle cx="12" cy="12" r="9.500" fill="#222" stroke="#ddd" stroke-width="2.600"/><path d="M12 6v8M7 12h10" stroke="#eee" stroke-width="2"/>',
    marks: '<path d="M3 6v13M9 6v8M14 6v8M20 6v13" stroke="#999" stroke-width="2"/>',
    slider: '<path d="M2 14h20" stroke="#999" stroke-width="2"/><circle cx="13" cy="14" r="4" fill="#e4e4e4"/><path d="M9 2v6L4 5zM16 2v6l5-3z" fill="#666"/>',
    key_prev: '<path d="M4 5h3v14H4zM18 5v14l-9-7z" fill="#3a4a36"/>',
    key_next: '<path d="M17 5h3v14h-3zM6 5v14l9-7z" fill="#3a4a36"/>',
    key: '<g fill="none" stroke="#777" stroke-width="2.600"><circle cx="15" cy="7" r="4.500"/><path d="M12 11L4 20M7 17l3 3M4 20l3 2"/></g>',
    key_refresh: '<path d="M2 1h14v20H2z" fill="#ddd"/><path d="M2 8h6v5H2z" fill="#c22"/><path d="M2 14h6v4H2z" fill="#4a3"/><path d="M2 18h6v4H2z" fill="#33c"/><path d="M18 8a6 6 0 1 0 1 7" fill="none" stroke="#333" stroke-width="4"/><path d="M18 8a6 6 0 1 0 1 7M20 4v6h-6" fill="none" stroke="#ccc" stroke-width="2.400"/>',
    curves: '<path d="M0 0h24v24H0z" fill="#080808"/><path d="M1 14c3-8 6-4 8 2s5 0 6-6 5-8 8 6" fill="none" stroke="#5a9ad8" stroke-width="2"/><path d="M1 12c3 3 6 4 9-1s7-4 13 2" fill="none" stroke="#d89030" stroke-width="2"/><path d="M0 13h24" stroke="#ccc"/>',
    brain: '<path d="M3 13c-2-6 2-10 8-10s11 3 11 9c0 5-4 6-6 6l-2 4-4-4c-4 0-6-2-7-5z" fill="#c8c8c6"/><path d="M7 8c3-1 4 1 4 3M13 5c0 4 4 3 5 6M6 14c3-2 5 0 8 0M15 15c2 0 4-1 5-3" stroke="#8a8a8a" fill="none"/>',
    refresh: '<path d="M4 11a8 8 0 0 1 15-3M20 13a8 8 0 0 1-15 3M20 3v6h-6M4 21v-6h6" fill="none" stroke="#5c5c5c" stroke-width="3"/>',
  }
</script>

{#snippet icon(name: string)}
  <svg class="icon" viewBox="0 0 24 24" aria-hidden="true">{@html icons[name]}</svg>
{/snippet}

{#snippet spinner()}
  <span class="spinner" aria-hidden="true">
    <i class="tri up"></i>
    <i class="tri down"></i>
  </span>
{/snippet}

{#snippet tool(name: string, flags: string)}
  <button class="tool" class:selected={flags.includes('s')} aria-label={name}>
    {@render icon(name)}
    {#if flags.includes('a')}<i class="corner right_arrow"></i>{/if}
  </button>
{/snippet}

{#snippet pane_tabs(tabs: string[], slanted = false)}
  <div class="pane_tabs">
    {#each tabs as tab, i}
      <div class="pane_tab" class:active={i === 0}>
        <button class="tab_name" class:slanted={slanted && i === 0}>{tab}</button>
        <button class="close" aria-label="Close {tab}">×</button>
      </div>
    {/each}
    <button class="plus" aria-label="New tab"></button>
    <button class="maximize" aria-label="Maximize pane"></button>
    <button class="tri down light" aria-label="Pane menu"></button>
  </div>
{/snippet}

{#snippet path_bar(extra: string[] = [])}
  <div class="path_bar">
    <button class="nav" aria-label="Back">{@render icon('back')}<i class="corner right_arrow"></i></button>
    <button class="nav" aria-label="Forward">{@render icon('forward')}</button>
    <div class="path_field">
      <button class="crumb">{@render icon('obj')}obj</button>
      <svg class="chevron" viewBox="0 0 8 22" aria-hidden="true"><path d="M1 0l6 11-6 11" /></svg>
      <button class="crumb">{@render icon('shapes')}trail</button>
      <button class="path_drop" aria-label="Path history"><i class="tri down"></i></button>
    </div>
    <button class="nav" aria-label="Pin">{@render icon('pin')}</button>
    <button class="nav" aria-label="Link">{@render icon('target')}</button>
    {#if extra.length}
      <div class="path_extra">
        {#each extra as name}
          <button class="nav" aria-label={name}>{@render icon(name)}<i class="corner down_arrow"></i></button>
        {/each}
      </div>
    {/if}
  </div>
{/snippet}

{#snippet h_splitter()}
  <div class="h_splitter"><i class="tri up"></i><i class="grip"></i><i class="tri down"></i></div>
{/snippet}

<svg class="defs" aria-hidden="true">
  <defs>
    <radialGradient id="ball" cx=".38" cy=".3" r=".75"><stop offset="0" stop-color="#f2f5f6" /><stop offset=".6" stop-color="#9fabb3" /><stop offset="1" stop-color="#4b565e" /></radialGradient>
    <radialGradient id="blue" cx=".38" cy=".3" r=".75"><stop offset="0" stop-color="#d8e8fa" /><stop offset=".6" stop-color="#6a94cc" /><stop offset="1" stop-color="#2c4c7c" /></radialGradient>
    <linearGradient id="steel"><stop offset="0" stop-color="#7d8c97" /><stop offset=".4" stop-color="#e2e8eb" /><stop offset="1" stop-color="#6b7983" /></linearGradient>
  </defs>
</svg>

<div class="app">
  <header class="menu_bar">
    <div class="handle"><i class="tri up black"></i></div>
    <nav class="menus">
      {#each main_menu as item}<button>{item}</button>{/each}
    </nav>
    <label class="combo">
      {@render icon('layout')}
      <select aria-label="Desktop"><option>custum1</option></select>
      {@render spinner()}
    </label>
    <label class="combo">
      {@render icon('desk')}
      <select aria-label="Radial menu"><option>Main</option></select>
      {@render spinner()}
    </label>
    <label class="combo take">
      {@render icon('clapper')}
      <select aria-label="Take"><option>Main</option></select>
      {@render spinner()}
    </label>
    <button class="nav" aria-label="Help">{@render icon('help')}</button>
  </header>

  <div class="shelves">
    <div class="handle"><i class="tri up black"></i></div>
    {#each shelf_sets as shelf, i}
      {#if i > 0}<div class="shelf_gutter"><i class="grip tall"></i></div>{/if}
      <section class="shelf">
        <div class="shelf_tabs">
          {#each shelf.tabs as tab, n}<button class="shelf_tab" class:active={n === 0}>{tab}</button>{/each}
          <button class="plus" aria-label="New shelf"></button>
          <button class="tri down light" aria-label="Shelf menu"></button>
        </div>
        <div class="shelf_tools" class:indented={i > 0}>
          {#each shelf.tools as [label, name, kind]}
            <button class="shelf_tool {kind ?? ''}">{@render icon(name)}<span>{label}</span></button>
          {/each}
          {#if i > 0}<i class="right_arrow more"></i>{/if}
        </div>
      </section>
    {/each}
  </div>

  <main class="desk">
    <div class="v_splitter edge"><i class="grip dots"></i></div>

    <div class="left_column">
      <section class="scene">
        {@render pane_tabs(scene_tabs)}
        {@render path_bar(['cube', 'solids', 'square'])}
        <div class="op_bar">
          <div class="handle"><i class="tri up black"></i></div>
          <button class="nav" aria-label="Grip">{@render icon('dots')}<i class="corner down_arrow"></i></button>
          <div class="op_tools">
            {#each ['view_tool', 'view_curve', 'view_box'] as name}
              <button class="nav wide" aria-label={name}>{@render icon(name)}<i class="corner down_arrow"></i></button>
            {/each}
            <i class="bar"></i>
            <button class="nav selected" aria-label="Objects">{@render icon('objects')}</button>
            <button class="nav small" aria-label="Zoom selected">{@render icon('zoom_sel')}</button>
            <i class="bar"></i>
            <button class="nav small" aria-label="Stop">{@render icon('stop')}</button>
            <i class="bar"></i>
            <button class="nav" aria-label="Inspect">{@render icon('bug')}</button>
            <button class="nav small" aria-label="Options">{@render icon('gearbox')}</button>
          </div>
          <button class="nav small" aria-label="Crowd">{@render icon('people')}<i class="corner down_arrow"></i></button>
          <button class="nav small" aria-label="Help">{@render icon('help')}</button>
        </div>

        <div class="view_row">
          <div class="tool_column left_tools">
            <div class="column_handle"><i class="left_arrow"></i></div>
            <div class="mode_group">
              {#each mode_tools as [name, flags]}{@render tool(name, flags)}{/each}
            </div>
            <hr />
            <div class="group spaced">
              {#each transform_tools as [name, flags]}{@render tool(name, flags)}{/each}
            </div>
            <hr />
            <div class="group">
              {#each snap_tools as [name, flags]}{@render tool(name, flags)}{/each}
            </div>
            <hr />
            <i class="tri down big"></i>
            <div class="group compact">
              {@render tool('papers', 'a')}
              {@render tool('reel', 'a')}
            </div>
          </div>

          <div class="viewport">
            <svg class="canvas" role="img" aria-label="Wireframe sword trail above a ground grid">
              <path d={grid_minor} class="grid_minor" />
              <path d={grid_major} class="grid_major" />
              <g transform="translate(418 11) scale(.33333)">
                <path class="mech" fill-rule="evenodd" d="M522 640L535 625 555 622 568 635 570 665 583 674 572 655 590 638 620 630 650 626 680 640 704 664 740 640 785 630 825 632 836 645 838 668 865 685 868 700 890 722 888 738 870 743 830 733 779 720 790 738 810 748 819 770 808 800 792 822 790 845 802 858 803 890 817 893 820 910 808 950 804 985 818 983 820 965 835 942 853 935 868 948 895 985 915 1005 928 1030 918 1055 920 1075 900 1097 885 1098 875 1109 845 1107 832 1095 800 1104 770 1123 712 1131 706 1125 708 1090 722 1070 725 1050 740 1028 742 953 725 950 712 942 715 965 705 978 650 1008 656 1020 653 1060 640 1072 626 1075 627 1110 618 1130 590 1135 548 1150 525 1168 485 1168 470 1150 463 1125 475 1100 500 1075 522 1065 513 1038 500 1050 465 1052 452 1045 435 1055 410 1048 390 1025 387 990 392 965 410 930 430 905 440 880 452 872 450 850 448 820 470 775 485 735 495 700zM538 812L555 825 570 850 595 872 570 890 545 915 525 920 500 943 495 910 485 890 505 880 522 855 533 830z" />
                <path class="specks" d="M484 848h4M478 856h4M490 830h4M474 840h4M496 862h4M488 776h4M500 770h4M496 790h4M508 745h4M520 796h4M590 834h4M606 842h4M634 820h4M634 895h4M652 900h4M626 884h4M642 904h4M584 910h4M650 948h4M658 948h4M634 1018h4M636 1030h4M530 1008h4M540 1010h4M672 694h4M680 696h4M752 692h8M756 688h4M716 722h4M704 738h4M808 658h4M536 646h4M592 1112h4M516 1142h4M736 1098h4M766 818h4M816 1000h4M430 946h4M456 942h4" />
                <path class="wire" d="M412 1052L285 1170M425 1055L300 1175M438 1057L300 1190M450 1050L290 1205M155 1160L195 1128M155 1160L215 1182 305 1165 292 1118 245 1105 275 1115M155 1160L175 1218 245 1232 215 1182M175 1218L240 1180M305 1165L325 1222 245 1240M195 1222L212 1270 268 1282 245 1232M200 1272L220 1328 292 1350 268 1282 350 1245 325 1222M350 1245L357 1282 292 1350M200 1272L260 1235 340 1228M220 1328L300 1258 357 1282M240 1330L300 1275 330 1245M225 1320L290 1340M290 1200L330 1240" />
                <polygon class="ribbon" points={ribbon} />
                {#each strands as t}
                  <polyline class="strand" points={poly(mix(t))} />
                {/each}
                <polygon class="core" points={ribbon_core} />
                {#each core_strands as t}
                  <polyline class="core_strand" points={poly(mix(t, 1, 8))} />
                {/each}
                {#each outer as [x, y], i}
                  <line class="strand" x1={x} y1={y} x2={inner[i][0]} y2={inner[i][1]} />
                {/each}
                <polygon class="slit" points={ribbon_slit} />
                <path class="wire front" d="M155 1160L220 1184 295 1165M220 1184L250 1235 325 1222M165 1150L222 1158 292 1118M218 1158L215 1184M250 1235L268 1282 330 1235M268 1282L292 1350M200 1272L220 1328 292 1350 357 1282 350 1245M155 1160L175 1218" />
                <path class="marker" d="M455 1236l10-2 12 6-14 2zM158 1380l12-2 10 6-12 2zM948 1000l12 2M1160 902l6 1" />
                <path class="marker red" d="M598 482h6M798 535h6M1006 590h8M248 387h6" />
              </g>
              <g class="axes">
                <path d="M15 494V482" stroke="#5cb85c" />
                <path d="M15 494l9 3" stroke="#e05a6a" />
                <path d="M15 494l-5 2" stroke="#6a6ae8" />
                <text x="16" y="483" fill="#5ce05c">y</text>
                <text x="25" y="498" fill="#e86a6a">x</text>
                <text x="6" y="498" fill="#7a7af0">z</text>
              </g>
            </svg>
            <div class="view_title">{@render icon('camera')}<strong>View</strong></div>
            <div class="view_pills">
              <button>Persp <i class="tri down light"></i></button>
              <button>No cam <i class="tri down light"></i></button>
            </div>
            <span class="edition">Indie Edition</span>
          </div>

          <div class="tool_column right_tools">
            <div class="column_handle end"><i class="right_arrow dark"></i></div>
            <div class="group first">
              {#each display_tools as [name, flags]}{@render tool(name, flags)}{/each}
            </div>
            <hr />
            <div class="group second">
              {#each marker_tools as [name, flags]}{@render tool(name, flags)}{/each}
            </div>
            <i class="stub"></i>
            <i class="tri down big"></i>
          </div>
        </div>
      </section>

      {@render h_splitter()}

      <section class="spreadsheet">
        {@render pane_tabs(['Geometry Spreadsheet'])}
        {@render path_bar()}
        <div class="filter_bar">
          <span class="node_name"><b>Node:</b> trail</span>
          <div class="class_buttons">
            {#each ['tree', 'vertex', 'prims', 'shapes'] as name, i}
              <button class:selected={i === 0} aria-label={name}>{@render icon(name)}</button>
            {/each}
          </div>
          <label for="group">Group:</label>
          <input id="group" type="text" />
          <button class="boxed" aria-label="Filter groups">{@render icon('filter')}</button>
          <span class="drop"><select aria-label="View"><option>View</option></select><i class="tri down"></i></span>
          <span class="drop off"><select aria-label="Intrinsics" disabled><option>Intrinsics</option></select><i class="tri down"></i></span>
          <label for="attributes">Attributes:</label>
          <input id="attributes" type="text" />
          <button class="boxed" aria-label="Filter attributes">{@render icon('filter')}</button>
          <button class="boxed plain" aria-label="Delta">{@render icon('delta')}</button>
          <button class="nav small push" aria-label="Help">{@render icon('help')}</button>
        </div>
        <div class="sheet">
          <div class="table_wrap">
            <table>
              <thead>
                <tr>
                  <th class="index"></th>
                  {#each columns as column}<th>{column}</th>{/each}
                  <th class="rest"></th>
                </tr>
              </thead>
              <tbody>
                {#each rows as row, i}
                  <tr>
                    <th scope="row">{i}</th>
                    {#each row as value}<td>{value}</td>{/each}
                    {#each { length: 4 } as _}<td>1.0</td>{/each}
                    <td></td>
                  </tr>
                {/each}
                <tr>
                  <th></th>
                  {#each columns as _}<td></td>{/each}
                  <td></td>
                </tr>
              </tbody>
            </table>
            <span class="indie">Indie</span>
          </div>
          <div class="v_scroll">
            <i class="thumb"></i>
            <button aria-label="Scroll up"><i class="tri up faint"></i></button>
            <button aria-label="Scroll down"><i class="tri down"></i></button>
          </div>
        </div>
        <div class="h_scroll"><i class="grip tall wide"></i><i class="left_arrow faint"></i><i class="right_arrow faint"></i></div>
      </section>
    </div>

    <div class="v_splitter"><i class="grip dots"></i></div>

    <div class="right_column">
      <section class="params">
        {@render pane_tabs(param_tabs, true)}
        {@render path_bar()}
        <div class="param_head">
          <button class="nav small" aria-label="Node type">{@render icon('ring_null')}<i class="corner down_arrow"></i></button>
          <label for="node_name">Null</label>
          <input id="node_name" type="text" value="trail" />
          <button class="nav small" aria-label="Settings">{@render icon('gear')}<i class="corner down_arrow"></i></button>
          <button class="nav small" aria-label="Brush">{@render icon('brush')}<i class="corner down_arrow"></i></button>
          <button class="nav small" aria-label="Search">{@render icon('search')}</button>
          <button class="nav small" aria-label="Info">{@render icon('info')}</button>
          <button class="nav small" aria-label="Help">{@render icon('help')}</button>
        </div>
        <div class="param_list">
          <label><input type="checkbox" bind:checked={copy_input} />Copy Input (Note: Input will be still cooked if disabled)</label>
          <label><input type="checkbox" bind:checked={cache_input} />Cache Input</label>
        </div>
      </section>

      {@render h_splitter()}

      <section class="network">
        {@render pane_tabs(network_tabs, true)}
        {@render path_bar()}
        <div class="network_bar">
          <div class="handle"><i class="tri up black"></i></div>
          <nav class="menus">
            {#each network_menu as item}<button>{item}</button>{/each}
          </nav>
          {#each [['tools', 'hier', 'list'], ['palette', 'grid_opts'], ['frames', 'sticky', 'image', 'archive'], ['search', 'view_eye']] as set}
            <div class="icon_set">
              {#each set as name}<button class="nav small" aria-label={name}>{@render icon(name)}</button>{/each}
            </div>
          {/each}
        </div>
        <div class="network_view">
          <svg class="canvas" role="img" aria-label="Node network">
            <g transform="translate(223 -6) scale(.33333)">
              <text x="190" y="108" class="watermark">Indie Edition</text>
              <circle cx="193" cy="134" r="74" class="halo" />
              <circle cx="289" cy="856" r="80" fill="#4a6a9c" />
              <circle cx="289" cy="856" r="53" fill="#9674c4" />
              <path class="link" d="M193 78V118M193 150V190M193 222V262M193 295L171 335M480 86L457 132M480 168L486 322M480 168C482 215 592 170 592 226M592 260C592 300 520 290 508 320M289 488L267 537M289 574L275 615M289 648V688M289 720V760M289 793V832M289 880V938" />
              <path class="link dashed" d="M193 372C200 415 275 410 275 455M496 365C496 420 305 400 305 455" />
              {#each nodes as node}
                <g transform="translate({node.x} {node.y})">
                  <rect x="-37" y="-12" width="75" height="25" rx={node.round ? 12 : 2} class="node_body" />
                  <path d="M-28-10l-4 20M-18-10l-4 20M19-10l4 20M29-10l4 20" class="node_stripe" />
                  <rect x="-9" y="-8" width="18" height="16" rx="4" fill={node.badge} />
                  <circle cy="17" r="5" class="port" />
                  {#if node.inputs}
                    {#each { length: node.inputs } as _, n}
                      <circle cx={node.inputs === 4 ? n * 15 - 22 : n * 30 - 15} cy="-17" r="5" class="port" />
                    {/each}
                  {:else}
                    <circle cy="-16" r="5" class="port" />
                  {/if}
                  {#if node.dots === 1 || node.dots === 2}<circle cx="52" cy="17" r="6" fill="#aee07a" />{/if}
                  {#if node.dots === 2}<circle cx="67" cy="17" r="6" fill="#66737a" />{/if}
                  {#if node.dots === 3}<circle cx="51" cy="17" r="6" fill="#66737a" />{/if}
                  <text x="44" y="3" class="node_label">{node.label}</text>
                </g>
              {/each}
              <path d="M214 123h12l6 10-6 10h-12z" fill="#d070c0" />
              <path d="M470 328c0-9 56-9 56 0z" fill="#aaa" />
              <text x="237" y="244" class="node_label note">not: 90082</text>
              <text x="333" y="619" class="node_label dim">Divide</text>
              <path d="M270 842l38 29M308 842l-38 29" class="null_glow" />
              <path d="M270 842l38 29M308 842l-38 29" class="null_edge" />
              <path d="M270 842l38 29M308 842l-38 29" class="null_body" />
              <circle cx="308" cy="845" r="8" fill="#2ca4e8" />
              <text x="322" y="844" class="node_label dim">Null</text>
              <text x="322" y="859" class="node_label">trail</text>
              <circle cx="330" cy="872" r="6" fill="#aee07a" />
              <path d="M252 942h74v24h-62l-12-14z" fill="#b0688a" stroke="#7a4460" stroke-width="2" />
              <path d="M284 956h18v8h-18zM288 948h8v6h-8z" fill="#4a3040" />
              <circle cx="289" cy="938" r="5" class="port" />
              <text x="333" y="957" class="node_label">rop_fbx1</text>
            </g>
          </svg>
          <span class="context">Geometry</span>
        </div>
      </section>
    </div>
  </main>

  <section class="timeline">
    <div class="handle low"><i class="tri down black"></i></div>
    <div class="tracks">
      <div class="track">
        <div class="button_row">
          {#each ['to_start', 'play_back', 'halt', 'play', 'to_end'] as name}
            <button class:selected={name === 'halt'} aria-label={name}>{@render icon(name)}</button>
          {/each}
        </div>
        <input class="frame_field now" type="text" aria-label="Current frame" value={current_frame} />
        <div class="button_row narrow">
          <button aria-label="Previous frame">{@render icon('step_back')}</button>
          <button aria-label="Next frame">{@render icon('step_next')}</button>
        </div>
        <div class="ruler">
          <span class="frame_label" style:left="{frame_pos(frame_start)}%">{frame_start}</span>
          {#each ticks as frame}
            <i class="tick" class:major={frame % 24 === 0} style:left="{frame_pos(frame)}%"></i>
          {/each}
          {#each major_frames as frame}
            <span class="frame_label" style:left="{frame_pos(frame)}%">{frame}</span>
          {/each}
          <span class="playhead" style:left="{frame_pos(current_frame)}%">{current_frame}</span>
        </div>
      </div>
      <div class="track">
        <div class="button_row">
          {#each ['range_cursor', 'speaker', 'loop', 'clock', 'marks', 'slider'] as name}
            <button aria-label={name}>{@render icon(name)}</button>
          {/each}
        </div>
        <div class="button_row off">
          <button aria-label="Previous key">{@render icon('key_prev')}</button>
          <button aria-label="Next key">{@render icon('key_next')}</button>
        </div>
        <input class="frame_field muted" type="text" aria-label="Global start" value={frame_start} />
        <input class="frame_field" type="text" aria-label="Range start" value={frame_start} />
        <div class="range"><i class="right_arrow"></i><i class="range_bar"></i><i class="left_arrow"></i></div>
        <input class="frame_field" type="text" aria-label="Range end" value={frame_end} />
        <input class="frame_field muted" type="text" aria-label="Global end" value={frame_end} />
      </div>
    </div>
    <div class="key_group">
      <button class="key_button" aria-label="Set key">{@render icon('key')}</button>
      <button class="key_drop" aria-label="Key options"><i class="tri down"></i></button>
    </div>
    <div class="channels">
      <button class="raised icon_button" aria-label="Update keys">{@render icon('key_refresh')}</button>
      <button class="raised keys">0 keys, 0/0 channels<i class="tri up big"></i></button>
      <button class="raised icon_button" aria-label="Channel curves">{@render icon('curves')}</button>
      <label class="combo raised">
        <select aria-label="Key scope"><option>Key All Channels</option></select>
        {@render spinner()}
      </label>
    </div>
  </section>

  <footer class="status">
    <span>Successfully saved qiita_mesh.hiplc (Wed Nov 26 00:41:43 2025)</span>
    <div class="status_tools">
      <button class="nav" aria-label="Cook state">{@render icon('brain')}<i class="corner right_arrow"></i></button>
      <button class="nav" aria-label="Recook">{@render icon('refresh')}</button>
      <label class="combo">
        <select aria-label="Update mode"><option>Auto Update</option></select>
        {@render spinner()}
      </label>
    </div>
  </footer>
</div>

<style>
  :global(body) {
    margin: 0;
    background: #3a3a3a;
  }

  .app {
    --ui: 'Noto Sans CJK JP', 'Open Sans', sans-serif;
    --mono: 'DejaVu Sans Mono', monospace;
    --select: linear-gradient(#5d7491, #7088a6);
    --raised: linear-gradient(#505050, #3c3c3c);

    display: flex;
    flex-direction: column;
    height: 100vh;
    min-height: 760px;
    overflow: hidden;
    color: #c8c8c8;
    background: #3a3a3a;
    font: 11px/16px var(--ui);
  }

  .defs {
    position: absolute;
    width: 0;
    height: 0;
  }

  button,
  input,
  select {
    box-sizing: border-box;
    margin: 0;
    border: 0;
    padding: 0;
    color: inherit;
    background: none;
    font: inherit;
    appearance: none;
    outline: none;
  }

  button {
    white-space: nowrap;
  }

  .icon {
    display: block;
    flex: none;
    width: 18px;
    height: 18px;
  }

  .icon :global(.icon_number) {
    fill: #e4e4e4;
    font: bold 13px var(--ui);
  }

  .icon :global(.icon_glyph) {
    fill: #f0f0f0;
    font: bold 16px var(--ui);
    text-anchor: middle;
  }

  .icon :global(.slanted),
  .slanted {
    font-style: italic;
  }

  /* small arrows */
  .tri {
    display: block;
    flex: none;
    border: 0 solid transparent;
    border-width: 0 4px;
    width: 0;
    height: 0;
  }

  .tri.up {
    border-bottom: 6px solid #8a8a8a;
  }

  .tri.down {
    border-top: 6px solid #8a8a8a;
  }

  .tri.down.light {
    border-top-color: #ddd;
  }

  .tri.black {
    border-bottom-color: #000;
    border-top-color: #000;
  }

  .tri.big {
    border-left-width: 5px;
    border-right-width: 5px;
  }

  .tri.up.faint {
    border-bottom-color: #555;
  }

  .right_arrow,
  .left_arrow {
    flex: none;
    border: 0 solid transparent;
    border-width: 4px 0;
    width: 0;
    height: 0;
  }

  .right_arrow {
    border-left: 4px solid #999;
  }

  .left_arrow {
    border-right: 5px solid #000;
  }

  .right_arrow.dark {
    border-left-color: #000;
    border-left-width: 6px;
  }

  .corner {
    position: absolute;
    right: 0;
    bottom: 0;
  }

  .down_arrow {
    border: 0 solid transparent;
    border-width: 0 4px;
    border-top: 4px solid #999;
  }

  .grip {
    width: 20px;
    height: 5px;
    background: radial-gradient(circle at 1px 1px, #888 1px, transparent 1px) 0 0 / 3px 3px;
  }

  .grip.dots {
    width: 6px;
    height: 20px;
  }

  .grip.tall {
    width: 6px;
    height: 16px;
    background: radial-gradient(circle at 1px 1px, #000 1px, transparent 1px) 0 0 / 3px 4px;
  }

  .grip.tall.wide {
    width: 12px;
    height: 8px;
    background-size: 3px 3px;
  }

  .handle {
    display: flex;
    flex: none;
    justify-content: center;
    box-sizing: border-box;
    border-right: 1px solid #000;
    padding-top: 2px;
    width: 9px;
    background: linear-gradient(90deg, #2d2d2d, #555);
  }

  .handle.low {
    align-items: flex-end;
    padding-bottom: 3px;
  }

  .nav {
    display: flex;
    position: relative;
    flex: none;
    align-items: center;
    justify-content: center;
    width: 20px;
    height: 22px;
  }

  .nav.small .icon {
    width: 16px;
    height: 16px;
  }

  .selected {
    background: var(--select);
  }

  /* top bar */
  .menu_bar {
    display: flex;
    flex: none;
    align-items: stretch;
    box-sizing: border-box;
    border-bottom: 1px solid #000;
    height: 26px;
    background: linear-gradient(#333, #3e3e3e);
  }

  .menus {
    display: flex;
    align-items: center;
    gap: 10px;
    padding: 0 7px;
    font-size: 12px;
  }

  .combo {
    display: flex;
    align-items: center;
    border-left: 1px solid #666;
    margin: 2px 0 1px 4px;
    background: linear-gradient(#3e3e3e, #545454);
  }

  .combo .icon {
    margin-left: 4px;
    width: 16px;
    height: 16px;
  }

  .combo select {
    padding-left: 5px;
    width: 84px;
    height: 100%;
  }

  .menu_bar > .combo:nth-of-type(1) {
    margin-left: 18px;
  }

  .combo.take {
    margin-left: auto;
  }

  .combo.take select {
    width: 126px;
  }

  .menu_bar > .nav {
    margin: 2px 6px;
  }

  .spinner {
    display: flex;
    flex-direction: column;
    align-items: center;
    align-self: stretch;
    justify-content: center;
    gap: 2px;
    width: 24px;
    background: #333;
  }

  .spinner .tri {
    border-left-width: 3px;
    border-right-width: 3px;
  }

  /* shelves */
  .shelves {
    display: grid;
    flex: none;
    grid-template-columns: 9px minmax(0, 955fr) 11px minmax(0, 945fr);
    border-bottom: 1px solid #000;
    height: 57px;
  }

  .shelf_gutter {
    display: grid;
    place-items: center;
    border: 0 solid #000;
    border-width: 0 1px;
    background: linear-gradient(90deg, #333, #4a4a4a);
  }

  .shelf {
    min-width: 0;
    overflow: hidden;
  }

  .shelf_tabs {
    display: flex;
    align-items: center;
    height: 18px;
    background: #292929;
    font-size: 9px;
  }

  .shelf_tab {
    box-sizing: border-box;
    border: 1px solid #000;
    border-width: 0 1px 1px 0;
    padding: 0 6px;
    height: 18px;
    background: linear-gradient(#383838, #2c2c2c);
    line-height: 17px;
  }

  .shelf_tab.active {
    border-color: transparent;
    border-top: 1px solid #666;
    background: #484848;
  }

  .plus {
    flex: none;
    margin: 0 9px;
    width: 10px;
    height: 10px;
    background:
      linear-gradient(#ddd, #ddd) center / 10px 3px no-repeat,
      linear-gradient(#ddd, #ddd) center / 3px 10px no-repeat;
  }

  .shelf_tabs > .tri {
    margin-left: auto;
    margin-right: 5px;
    border-left-width: 3px;
    border-right-width: 3px;
  }

  .shelf_tools {
    display: flex;
    align-items: stretch;
    position: relative;
    height: 39px;
    background: linear-gradient(#484848, #3a3a3a);
    font-size: 9px;
  }

  .shelf_tools.indented {
    padding-left: 16px;
  }

  .shelf_tool {
    display: flex;
    flex: none;
    flex-direction: column;
    align-items: center;
    padding: 3px 3px 0;
    min-width: 41px;
    line-height: 14px;
  }

  .shelf_tool .icon {
    width: 20px;
    height: 20px;
  }

  .two_line {
    width: 69px;
    line-height: 9px;
  }

  .two_line span {
    margin-top: -3px;
    width: min-content;
    white-space: normal;
  }

  .cut {
    flex: none;
    min-width: 0;
    width: 24px;
  }

  .more {
    position: absolute;
    top: 15px;
    right: 4px;
    border-width: 5px 0;
    border-left-width: 8px;
  }

  /* desk */
  .desk {
    display: grid;
    flex: 1;
    grid-template-columns: 7px minmax(0, 1224fr) 6px minmax(0, 683fr);
    min-height: 0;
  }

  .v_splitter {
    display: grid;
    place-items: center;
    background: #4a4a4a;
    overflow: hidden;
  }

  .edge {
    border-right: 1px solid #2a2a2a;
  }

  .left_column,
  .right_column {
    display: flex;
    flex-direction: column;
    min-width: 0;
    min-height: 0;
  }

  .left_column {
    border-right: 1px solid #000;
  }

  .h_splitter {
    display: flex;
    flex: none;
    align-items: center;
    justify-content: center;
    gap: 16px;
    box-sizing: border-box;
    border-top: 1px solid #777;
    height: 7px;
    background: #4a4a4a;
  }

  .h_splitter .tri {
    border-left-width: 3px;
    border-right-width: 3px;
    border-top-width: 3px;
    border-bottom-width: 3px;
  }

  .h_splitter .tri.up {
    border-top-width: 0;
  }

  .h_splitter .tri.down {
    border-bottom-width: 0;
  }

  .pane_tabs {
    display: flex;
    flex: none;
    align-items: center;
    height: 19px;
    background: #2d2d2d;
    font-size: 10px;
  }

  .pane_tab {
    display: flex;
    align-items: center;
    box-sizing: border-box;
    border-right: 2px solid #1e1e1e;
    padding: 0 4px 0 6px;
    height: 19px;
  }

  .pane_tab.active {
    background: #484848;
  }

  .close {
    margin-left: 11px;
    width: 6px;
    color: #ddd;
    font-weight: bold;
    font-size: 9px;
    line-height: 14px;
  }

  .maximize {
    margin: 0 10px 0 auto;
    width: 10px;
    height: 8px;
    background: #e0e0e0;
  }

  .pane_tabs > .tri {
    margin-right: 5px;
    border-left-width: 3px;
    border-right-width: 3px;
    border-top-width: 5px;
  }

  .path_bar {
    display: flex;
    flex: none;
    align-items: center;
    gap: 3px;
    box-sizing: border-box;
    border-bottom: 1px solid #000;
    padding: 0 4px 0 4px;
    height: 34px;
    background: linear-gradient(#484848, #3a3a3a);
  }

  .path_bar > .nav:nth-child(2) {
    margin: 0 6px 0 1px;
  }

  .path_field {
    display: flex;
    flex: 1;
    align-items: center;
    box-sizing: border-box;
    border: 1px solid #000;
    margin-right: 6px;
    padding-left: 5px;
    height: 24px;
    background: linear-gradient(#474747, #3a3a3a);
    box-shadow: inset 0 1px #585858;
  }

  .crumb {
    display: flex;
    align-items: center;
    gap: 4px;
  }

  .chevron {
    margin: 0 4px 0 7px;
    width: 8px;
    height: 22px;
    fill: none;
    stroke: #111;
  }

  .path_drop {
    display: grid;
    place-items: center;
    margin-left: auto;
    width: 18px;
    height: 22px;
    background: linear-gradient(#4a4a4a, #303030);
  }

  .path_extra {
    display: flex;
    gap: 3px;
    margin-left: 12px;
  }

  .op_bar {
    display: flex;
    flex: none;
    align-items: center;
    box-sizing: border-box;
    border-top: 1px solid #5a5a5a;
    border-bottom: 1px solid #000;
    padding-right: 4px;
    height: 32px;
    background: linear-gradient(#2a2a2a, #3a3a3a);
  }

  .op_bar > .handle {
    align-self: stretch;
  }

  .op_bar > .nav {
    margin-left: 5px;
  }

  .op_tools {
    display: flex;
    align-items: center;
    justify-content: center;
    gap: 6px;
    flex: 1;
  }

  .op_tools .wide {
    width: 26px;
  }

  .op_tools .wide .corner {
    right: 3px;
  }

  .bar {
    width: 1px;
    height: 24px;
    background: #555;
  }

  .scene {
    display: flex;
    flex: 1;
    flex-direction: column;
    min-height: 0;
  }

  .view_row {
    display: flex;
    flex: 1;
    min-height: 0;
  }

  .tool_column {
    display: flex;
    flex: none;
    flex-direction: column;
    align-items: center;
    overflow: hidden;
  }

  .left_tools {
    width: 34px;
  }

  .right_tools {
    width: 26px;
  }

  .column_handle {
    display: flex;
    flex: none;
    align-items: center;
    align-self: stretch;
    border-bottom: 1px solid #000;
    padding: 0 3px;
    height: 9px;
    background: linear-gradient(#555, #333);
  }

  .column_handle.end {
    justify-content: flex-end;
  }

  hr {
    flex: none;
    margin: 4px 0 3px;
    border: 0;
    width: 28px;
    height: 1px;
    background: #555;
  }

  .tool {
    display: flex;
    position: relative;
    flex: none;
    align-items: center;
    justify-content: center;
    width: 26px;
    height: 28px;
  }

  .tool .icon {
    width: 20px;
    height: 20px;
  }

  .tool .corner {
    right: -2px;
    bottom: 4px;
  }

  .mode_group {
    margin: 5px 0 3px;
    border: 1px solid #000;
    background: #484848;
  }

  .mode_group .tool {
    width: 23px;
    height: 24px;
  }

  .mode_group .tool .corner,
  .right_tools .tool .corner {
    right: 0;
    bottom: 2px;
  }

  .group.spaced {
    margin-top: 16px;
  }

  .left_tools > .tri {
    margin: 1px 0 8px;
  }

  .group.compact .tool {
    height: 24px;
  }

  .right_tools .tool {
    width: 24px;
    height: 25px;
  }

  .right_tools .icon {
    width: 16px;
    height: 16px;
  }

  .right_tools .selected {
    outline: 1px solid #4c4c4c;
  }

  .group.first {
    margin-top: 18px;
  }

  .right_tools hr {
    margin: 0 0 2px;
    width: 24px;
  }

  .stub {
    flex: none;
    width: 22px;
    height: 4px;
    background: #5d7491;
  }

  .right_tools > .tri {
    margin-top: 6px;
  }

  .viewport {
    position: relative;
    flex: 1;
    min-width: 0;
    overflow: hidden;
    background: #000;
  }

  .canvas {
    display: block;
    position: absolute;
    inset: 0;
    width: 100%;
    height: 100%;
  }

  .grid_minor {
    stroke: #0d1f29;
  }

  .grid_major {
    stroke: #10252f;
    stroke-width: 2;
  }

  .mech {
    fill: #828071;
  }

  .specks {
    stroke: #3c3b33;
    stroke-width: 4;
  }

  .wire {
    fill: none;
    stroke: #8b8978;
    stroke-width: 5;
  }

  .wire.front {
    stroke-width: 7;
  }

  .ribbon {
    fill: #4a5888;
  }

  .core {
    fill: #565655;
  }

  .core_strand {
    fill: none;
    stroke: #74726a;
    stroke-width: 3;
  }

  .strand {
    fill: none;
    stroke: #303a5c;
    stroke-width: 3;
  }

  .slit {
    fill: #04061a;
  }

  .marker {
    fill: none;
    stroke: #4a4468;
    stroke-width: 3;
  }

  .marker.red {
    stroke: #4a2420;
  }

  .axes {
    font: 11px var(--ui);
    stroke-width: 1;
  }

  .axes path {
    fill: none;
  }

  .view_title {
    display: flex;
    position: absolute;
    top: 15px;
    left: 16px;
    align-items: center;
    gap: 12px;
    color: #fff;
    font: bold 13px/22px 'Noto Sans', sans-serif;
  }

  .view_title .icon {
    width: 22px;
    height: 22px;
  }

  .view_pills {
    display: flex;
    position: absolute;
    top: 5px;
    right: 6px;
    gap: 7px;
  }

  .view_pills button {
    display: flex;
    align-items: center;
    gap: 3px;
    border: 1px solid #999;
    border-radius: 10px;
    padding: 0 7px;
    height: 20px;
    background: #0a0a0a;
  }

  .view_pills .tri {
    border-left-width: 3px;
    border-right-width: 3px;
    border-top-width: 3px;
  }

  .edition {
    position: absolute;
    right: 12px;
    bottom: 7px;
    color: #cccc14;
  }

  /* geometry spreadsheet */
  .spreadsheet {
    flex: none;
  }

  .filter_bar {
    display: flex;
    align-items: center;
    box-sizing: border-box;
    border-top: 1px solid #666;
    border-bottom: 1px solid #000;
    margin-top: 1px;
    padding: 0 4px 0 5px;
    height: 28px;
    background: linear-gradient(#2e2e2e, #333);
  }

  .node_name {
    width: 204px;
  }

  .class_buttons {
    display: flex;
    border: 1px solid #111;
  }

  .class_buttons button {
    display: grid;
    place-items: center;
    width: 20px;
    height: 20px;
    background: var(--raised);
  }

  .class_buttons .icon,
  .boxed .icon {
    width: 15px;
    height: 15px;
  }

  .class_buttons .selected {
    background: var(--select);
  }

  .filter_bar label {
    margin: 0 1px 0 2px;
  }

  .filter_bar input {
    border: 1px solid #2a2a2a;
    width: 176px;
    height: 22px;
    background: #131313;
  }

  .boxed {
    display: grid;
    place-items: center;
    border: 1px solid #000;
    margin: 0 4px 0 1px;
    width: 21px;
    height: 21px;
  }

  .boxed.plain {
    margin-left: 0;
    width: 18px;
    height: 18px;
    background: var(--raised);
  }

  .drop {
    display: flex;
    align-items: center;
    margin-right: 3px;
    padding-right: 6px;
    height: 21px;
    background: linear-gradient(#505050, #3c3c3c);
  }

  .drop select {
    padding-left: 13px;
    width: 91px;
    height: 21px;
  }

  .drop.off {
    margin-right: 0;
    color: #777;
    background: #303030;
  }

  .drop.off select {
    width: 114px;
    opacity: 1;
  }

  .drop.off .tri {
    border-top-color: #4a4a4a;
  }

  .push {
    margin-left: auto;
  }

  .sheet {
    display: flex;
    border-top: 1px solid #000;
    border-bottom: 1px solid #111;
    height: 112px;
  }

  .table_wrap {
    position: relative;
    flex: 1;
    min-width: 0;
    border-right: 2px solid #1a1a1a;
    margin-left: 2px;
    overflow: hidden;
  }

  table {
    border-collapse: collapse;
    width: 100%;
    table-layout: fixed;
    font-family: var(--mono);
  }

  th,
  td {
    box-sizing: border-box;
    border-right: 1px solid #000;
    padding: 0 3px;
    width: 85px;
    height: 18px;
    font-weight: normal;
    line-height: 17px;
    text-align: left;
  }

  td {
    font-size: 12px;
  }

  th {
    background: linear-gradient(#3a3a3a, #242424);
  }

  thead th {
    border-bottom: 1px solid #111;
    height: 17px;
    font-family: var(--ui);
    line-height: 15px;
  }

  tbody th {
    border-bottom: 1px solid #000;
    font-family: var(--ui);
    line-height: 15px;
  }

  .rest {
    width: auto;
  }

  tbody tr:nth-child(odd) {
    background: #2d2d2d;
  }

  tbody tr:nth-child(even) {
    background: #393939;
  }

  .indie {
    position: absolute;
    right: 4px;
    bottom: -2px;
    color: #ddd;
  }

  .v_scroll {
    display: flex;
    flex-direction: column;
    width: 14px;
    background: #242424;
  }

  .v_scroll .thumb {
    margin-bottom: auto;
    height: 13px;
    background:
      radial-gradient(circle at 1px 1px, #000 1px, transparent 1px) 3px 5px / 3px 13px,
      #4a4a4a;
  }

  .v_scroll button {
    display: grid;
    place-items: center;
    border-top: 1px solid #000;
    height: 18px;
    background: #3c3c3c;
  }

  .h_scroll {
    display: flex;
    align-items: center;
    gap: 14px;
    margin-right: 20px;
    height: 15px;
    background: #333;
  }

  .h_scroll .grip {
    margin-left: auto;
    margin-right: auto;
  }

  .right_arrow.faint {
    border-left-color: #555;
  }

  .left_arrow.faint {
    border-right-color: #555;
  }

  /* parameters and network */
  .params {
    display: flex;
    flex: 396 1 0;
    flex-direction: column;
    min-height: 0;
  }

  .network {
    display: flex;
    flex: 408 1 0;
    flex-direction: column;
    min-height: 0;
  }

  .param_head {
    display: flex;
    align-items: center;
    gap: 6px;
    box-sizing: border-box;
    border-bottom: 1px solid #000;
    padding: 0 4px;
    height: 27px;
  }

  .param_head label {
    margin: 0 -1px 0 -3px;
    font-weight: bold;
  }

  .param_head input {
    flex: 1;
    border: 1px solid #2c2c2c;
    padding-left: 3px;
    height: 22px;
    color: #eee;
    background: #131313;
    font: 11px var(--mono);
  }

  .param_list {
    display: flex;
    flex-direction: column;
    gap: 5px;
    padding: 4px 0 0 154px;
  }

  .param_list label {
    display: flex;
    align-items: center;
    gap: 7px;
  }

  .param_list input {
    display: grid;
    place-items: center;
    border: 1px solid #262626;
    width: 14px;
    height: 14px;
    background: #131313;
  }

  .param_list input:checked::before {
    width: 10px;
    height: 11px;
    background: #eee;
    clip-path: polygon(0 50%, 30% 50%, 42% 70%, 80% 0, 100% 0, 55% 100%, 35% 100%);
    content: '';
  }

  .network_bar {
    display: flex;
    flex: none;
    align-items: stretch;
    box-sizing: border-box;
    border-bottom: 1px solid #000;
    padding-left: 1px;
    height: 26px;
    background: linear-gradient(#333, #3e3e3e);
  }

  .network_bar .menus {
    gap: 14px;
    flex: 1;
    padding: 0 8px;
  }

  .icon_set {
    display: flex;
    align-items: center;
    gap: 5px;
    margin-left: 20px;
  }

  .icon_set:last-child {
    margin-right: 2px;
  }

  .network_view {
    position: relative;
    flex: 1;
    background: #303030;
    overflow: hidden;
  }

  .watermark {
    fill: #454545;
    font: 54px var(--ui);
  }

  .context {
    position: absolute;
    top: 11px;
    right: 12px;
    color: #565656;
    font-size: 23px;
    font-weight: bold;
    line-height: 32px;
  }

  .halo {
    fill: none;
    stroke: #7a4a78;
    stroke-width: 11;
  }

  .link {
    fill: none;
    stroke: #5a8cc8;
    stroke-width: 4;
  }

  .link.dashed {
    stroke-dasharray: 6 5;
  }

  .node_body {
    fill: #c8c8c8;
    stroke: #777;
    stroke-width: 2;
  }

  .node_stripe {
    stroke: #888;
    stroke-width: 3;
  }

  .port {
    fill: #c0c0c0;
  }

  .node_label {
    fill: #b4b4b4;
    font: 13px var(--ui);
  }

  .node_label.dim {
    fill: #777;
  }

  .node_label.note {
    fill: #5a8ac0;
  }

  .null_glow,
  .null_edge,
  .null_body {
    fill: none;
    stroke-linecap: round;
  }

  .null_glow {
    stroke: #e0a8b0;
    stroke-width: 27;
  }

  .null_edge {
    stroke: #111;
    stroke-width: 21;
  }

  .null_body {
    stroke: #a8b8c4;
    stroke-width: 14;
  }

  /* playbar */
  .timeline {
    display: flex;
    flex: none;
    box-sizing: border-box;
    border-top: 1px solid #777;
    height: 71px;
    background: #2e2e2e;
  }

  .tracks {
    display: flex;
    flex: 1;
    flex-direction: column;
    gap: 5px;
    min-width: 0;
    padding: 6px 0 0 6px;
  }

  .track {
    display: flex;
    align-items: center;
    gap: 3px;
    height: 29px;
  }

  .button_row {
    display: flex;
    gap: 1px;
    border-bottom: 1px solid #000;
    background: #000;
  }

  .button_row button {
    display: grid;
    place-items: center;
    width: 26px;
    height: 27px;
    background: var(--raised);
  }

  .button_row .selected {
    background: var(--select);
  }

  .track + .track .button_row button {
    height: 24px;
  }

  .button_row .icon {
    width: 20px;
    height: 20px;
  }

  .narrow button {
    width: 13px;
  }

  .narrow .icon {
    width: 12px;
    height: 12px;
  }

  .button_row.off button {
    width: 22px;
    background: #303030;
  }

  .button_row.off .icon {
    width: 14px;
    height: 14px;
  }

  .button_row.off {
    margin-right: 6px;
  }

  .frame_field {
    border: 1px solid #262626;
    padding-left: 3px;
    width: 43px;
    height: 22px;
    color: #e4e4e4;
    background: #131313;
    font: 11px var(--mono);
  }

  .frame_field.now {
    width: 48px;
    height: 27px;
  }

  .frame_field.muted {
    background: #222;
  }

  .ruler {
    position: relative;
    flex: 1;
    align-self: stretch;
    margin: 0 7px 0 3px;
  }

  .ruler::before {
    position: absolute;
    top: 16px;
    left: 0;
    right: -5px;
    height: 1px;
    background: #aaa;
    content: '';
  }

  .tick {
    position: absolute;
    top: 12px;
    width: 1px;
    height: 9px;
    background: #777;
  }

  .tick.major {
    top: 9px;
    height: 15px;
    background: #aaa;
  }

  .frame_label {
    position: absolute;
    top: -8px;
    color: #888;
    font-size: 10px;
  }

  .playhead {
    position: absolute;
    top: -4px;
    box-sizing: border-box;
    border: 1px solid #fff;
    width: 28px;
    height: 19px;
    color: #fff;
    background: #000;
    font: 11px/17px var(--mono);
    text-align: center;
    transform: translateX(-50%);
  }

  .playhead::after {
    position: absolute;
    top: 17px;
    left: 8px;
    border: 5px solid transparent;
    border-top: 5px solid #fff;
    border-bottom: 0;
    content: '';
  }

  .range {
    display: flex;
    flex: 1;
    align-items: center;
  }

  .range > i:first-child {
    border-width: 6px 0;
    border-left: 6px solid #aaa;
  }

  .range > i:last-child {
    border-width: 6px 0;
    border-right: 6px solid #aaa;
  }

  .range_bar {
    flex: 1;
    height: 3px;
    background: #777;
  }

  .key_group {
    display: flex;
    align-items: center;
    margin: 0 6px 3px 3px;
  }

  .key_button {
    display: grid;
    place-items: center;
    border: 1px solid #1e1e1e;
    border-radius: 50%;
    width: 40px;
    height: 40px;
    background: #333;
  }

  .key_drop {
    display: grid;
    place-items: center;
    border: 1px solid #1e1e1e;
    border-left: 0;
    width: 14px;
    height: 20px;
    background: #363636;
  }

  .channels {
    display: grid;
    grid-template-columns: 24px 152px;
    gap: 5px 5px;
    align-content: start;
    padding: 7px 6px 0 0;
  }

  .raised {
    display: flex;
    align-items: center;
    justify-content: center;
    box-sizing: border-box;
    border: 1px solid #161616;
    margin: 0;
    height: 24px;
    background: var(--raised);
  }

  .raised .icon {
    width: 16px;
    height: 16px;
    margin: 0;
  }

  .keys {
    justify-content: space-between;
    padding: 0 4px 0 17px;
  }

  .channels .combo select {
    flex: 1;
    padding-left: 14px;
  }

  .status {
    display: flex;
    flex: none;
    align-items: center;
    justify-content: space-between;
    box-sizing: border-box;
    border-top: 1px solid #000;
    padding-left: 2px;
    height: 25px;
    background: #191919;
  }

  .status_tools {
    display: flex;
    align-items: stretch;
    align-self: stretch;
    background: #333;
  }

  .status_tools .nav {
    margin: 1px 3px;
  }

  .status_tools .combo {
    margin: 0 0 0 2px;
    background: var(--raised);
  }

  .status_tools .combo select {
    padding-left: 15px;
    width: 92px;
  }
</style>
